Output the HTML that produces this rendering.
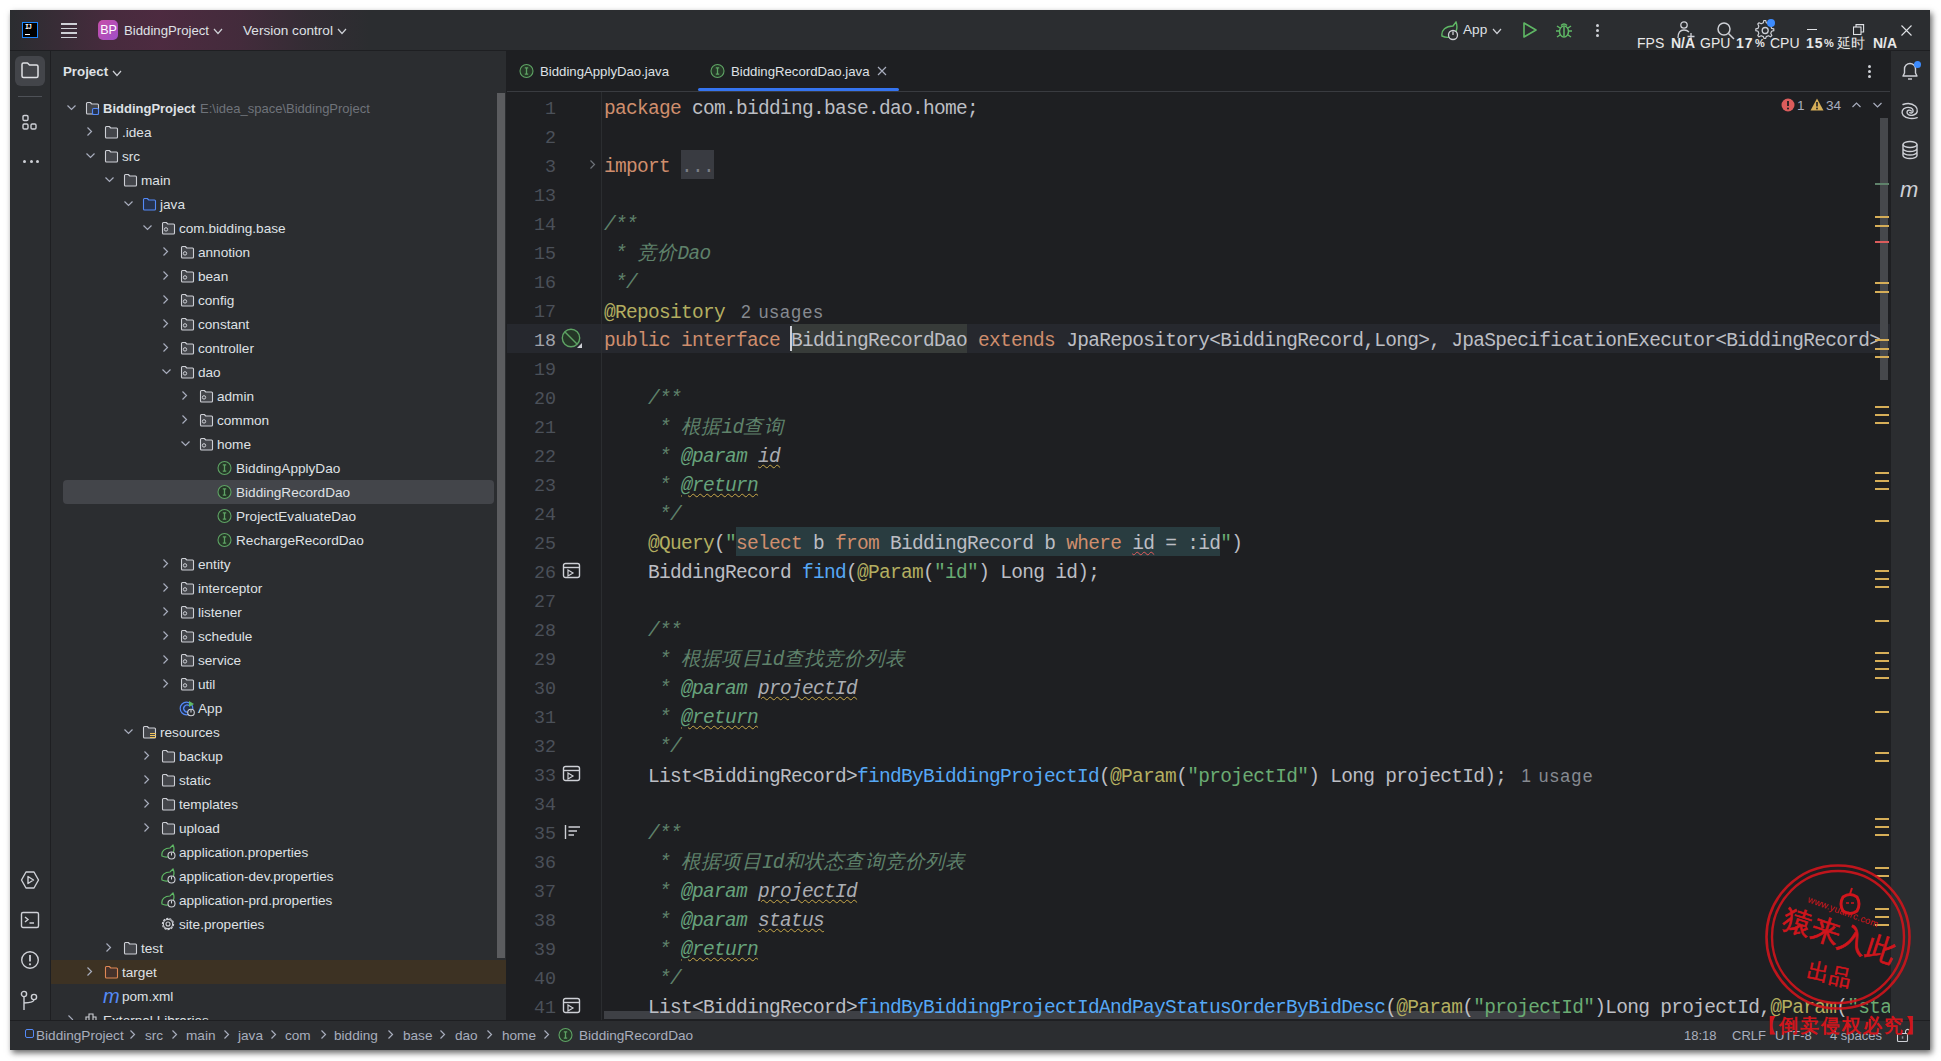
<!DOCTYPE html><html><head><meta charset="utf-8"><style>
*{box-sizing:border-box;margin:0;padding:0}
html,body{width:1941px;height:1061px;overflow:hidden;background:#fff}
body{position:relative;font-family:"Liberation Sans",sans-serif}
.a{position:absolute}
#win{position:absolute;left:10px;top:10px;width:1920px;height:1040px;background:#2B2D30;box-shadow:2px 3px 6px 0 rgba(0,0,0,.6);overflow:hidden}
.ui{font-family:"Liberation Sans",sans-serif;font-size:13.6px;color:#DFE1E5;white-space:nowrap}
.code{font-family:"Liberation Mono",monospace;font-size:19.5px;letter-spacing:-.7px;color:#BCBEC4;white-space:pre;line-height:29px;height:29px}
.kw{color:#CF8E6D} .st{color:#6AAB73} .an{color:#B3AE60} .fn{color:#56A8F5}
.dc{color:#5F826B;font-style:italic} .dt{color:#67A37C;font-style:italic} .dv{color:#ABADB3;font-style:italic}
.cj{font-size:19.5px;letter-spacing:.2px}
.wy{text-decoration:underline wavy #C9A94A;text-decoration-thickness:1px;text-underline-offset:2px}
.wr{text-decoration:underline wavy #E55B5B;text-decoration-thickness:1px;text-underline-offset:2px}
.ln{font-family:"Liberation Mono",monospace;font-size:18.333px;color:#4B5059;text-align:right;width:60px;line-height:29px;height:29px}
.hint{font-family:"Liberation Sans",sans-serif;font-size:17.5px;color:#868A91;letter-spacing:1.5px}
svg{display:block}
</style></head><body><div id="win">
<div class="a" style="left:0;top:0;width:1920px;height:40px;background:#2B2D30"></div>
<div class="a" style="left:0;top:0;width:700px;height:40px;background:linear-gradient(90deg, rgba(110,40,80,0) 0px, rgba(110,40,80,.16) 40px, rgba(110,40,80,.42) 100px, rgba(110,40,80,.5) 150px, rgba(110,40,80,.36) 230px, rgba(110,40,80,.12) 300px, rgba(110,40,80,0) 360px)"></div>
<div class="a" style="left:0;top:40px;width:1920px;height:1px;background:#1E1F22"></div>
<div class="a" style="left:12px;top:12px;width:16px;height:16px;background:#000;border:1.2px solid #1A86FF"></div>
<div class="a" style="left:15px;top:14px;font:bold 6.5px 'Liberation Mono';color:#fff;letter-spacing:-.8px">IJ</div>
<div class="a" style="left:15px;top:24px;width:5px;height:1px;background:#fff"></div>
<div class="a" style="left:51px;top:13.0px;width:16px;height:1.6px;background:#CED0D6"></div>
<div class="a" style="left:51px;top:17.5px;width:16px;height:1.6px;background:#CED0D6"></div>
<div class="a" style="left:51px;top:22.0px;width:16px;height:1.6px;background:#CED0D6"></div>
<div class="a" style="left:51px;top:26.5px;width:16px;height:1.6px;background:#CED0D6"></div>
<div class="a" style="left:88px;top:10px;width:20px;height:20px;border-radius:5px;background:linear-gradient(135deg,#C64FA8,#A04EC9)"></div>
<div class="a ui" style="left:89px;top:13px;font-size:12.5px;color:#fff;width:19px;text-align:center">BP</div>
<div class="a ui" style="left:114px;top:13px;font-size:13.2px">BiddingProject</div>
<svg class="a" style="left:203px;top:18px" width="10" height="6.5"><path d="M1 1 L5.0 5.5 L9 1" fill="none" stroke="#CED0D6" stroke-width="1.2"/></svg>
<div class="a ui" style="left:233px;top:13px;font-size:13.6px">Version control</div>
<svg class="a" style="left:327px;top:18px" width="10" height="6.5"><path d="M1 1 L5.0 5.5 L9 1" fill="none" stroke="#CED0D6" stroke-width="1.2"/></svg>
<svg class="a" style="left:1429px;top:11px" width="22" height="20" viewBox="0 0 22 20"><path d="M3 15 C2 9 7 5 14 5 L17 1 C19 6 18 13 11 16 C8 17 5 16 3 15 Z" fill="none" stroke="#5FB865" stroke-width="1.4"/><circle cx="14" cy="14" r="4.5" fill="#2B2D30" stroke="#CED0D6" stroke-width="1.3"/><path d="M14 10.5 V14" stroke="#CED0D6" stroke-width="1.3"/></svg>
<div class="a ui" style="left:1453px;top:12px;font-size:13.6px">App</div>
<svg class="a" style="left:1482px;top:18px" width="10" height="6.5"><path d="M1 1 L5.0 5.5 L9 1" fill="none" stroke="#CED0D6" stroke-width="1.2"/></svg>
<svg class="a" style="left:1512px;top:11px" width="16" height="18"><path d="M2 2 L14 9 L2 16 Z" fill="none" stroke="#5FB865" stroke-width="1.6" stroke-linejoin="round"/></svg>
<svg class="a" style="left:1545px;top:11px" width="18" height="18" viewBox="0 0 18 18"><ellipse cx="9" cy="10.5" rx="4.5" ry="5.5" fill="none" stroke="#5FB865" stroke-width="1.5"/><path d="M6 4.5 Q9 1.5 12 4.5 M1 10 H4.5 M13.5 10 H17 M2 5 L5 7 M16 5 L13 7 M2 16 L5 14 M16 16 L13 14 M9 6 V15" fill="none" stroke="#5FB865" stroke-width="1.5"/></svg>
<div class="a" style="left:1586px;top:14px;width:3px;height:3px;border-radius:50%;background:#CED0D6"></div>
<div class="a" style="left:1586px;top:19px;width:3px;height:3px;border-radius:50%;background:#CED0D6"></div>
<div class="a" style="left:1586px;top:24px;width:3px;height:3px;border-radius:50%;background:#CED0D6"></div>
<svg class="a" style="left:1666px;top:10px" width="22" height="22" viewBox="0 0 22 22"><circle cx="8" cy="5" r="3.2" fill="none" stroke="#CED0D6" stroke-width="1.3"/><path d="M2 18 C2 12 5 10 8 10 C10 10 12 11 13 12 M15 13 V20 M11.5 16.5 H18.5" fill="none" stroke="#CED0D6" stroke-width="1.3"/></svg>
<svg class="a" style="left:1706px;top:11px" width="20" height="20"><circle cx="8" cy="8" r="6" fill="none" stroke="#CED0D6" stroke-width="1.5"/><path d="M12.5 12.5 L18 18" stroke="#CED0D6" stroke-width="1.5"/></svg>
<svg class="a" style="left:1745px;top:10px" width="22" height="22" viewBox="0 0 22 22"><path d="M11 2 L13 2 L13.6 4.6 L16 5.8 L18.4 4.6 L19.8 6 L18.6 8.4 L19.5 10.8 L22 11.4 L22 13.4 L19.5 14 L18.6 16.4 L19.8 18.8 L18.4 20.2 L16 19 L13.6 20 L13 22 L11 22 L10.4 20 L8 19 L5.6 20.2 L4.2 18.8 L5.4 16.4 L4.5 14 L2 13.4 L2 11.4 L4.5 10.8 L5.4 8.4 L4.2 6 L5.6 4.6 L8 5.8 L10.4 4.6 Z" transform="translate(-1 -1.4) scale(.9)" fill="none" stroke="#CED0D6" stroke-width="1.3" stroke-linejoin="round"/><circle cx="10.2" cy="10.5" r="3" fill="none" stroke="#CED0D6" stroke-width="1.3"/></svg>
<div class="a" style="left:1757px;top:9px;width:8px;height:8px;border-radius:50%;background:#3D8CFF"></div>
<div class="a" style="left:1797px;top:19px;width:10px;height:1.2px;background:#DFE1E5"></div>
<svg class="a" style="left:1843px;top:14px" width="12" height="12"><rect x="0.5" y="3" width="7.5" height="7.5" fill="none" stroke="#DFE1E5" stroke-width="1.1"/><path d="M3 3 V0.6 H10.6 V8 H8" fill="none" stroke="#DFE1E5" stroke-width="1.1"/></svg>
<svg class="a" style="left:1891px;top:15px" width="11" height="11"><path d="M0.5 0.5 L10.5 10.5 M10.5 0.5 L0.5 10.5" stroke="#DFE1E5" stroke-width="1.1"/></svg>
<div class="a ui" style="left:1627px;top:25px;font-size:14px;color:#E8E8E8;">FPS</div>
<div class="a ui" style="left:1661px;top:25px;font-size:14px;color:#E8E8E8;font-weight:bold;">N/A</div>
<div class="a ui" style="left:1690px;top:25px;font-size:14px;color:#E8E8E8;">GPU</div>
<div class="a ui" style="left:1726px;top:25px;font-size:14px;color:#E8E8E8;font-weight:bold;letter-spacing:1px;">17</div>
<div class="a ui" style="left:1745px;top:27px;font-size:11px;color:#E8E8E8;font-weight:bold;">%</div>
<div class="a ui" style="left:1760px;top:25px;font-size:14px;color:#E8E8E8;">CPU</div>
<div class="a ui" style="left:1796px;top:25px;font-size:14px;color:#E8E8E8;font-weight:bold;letter-spacing:1px;">15</div>
<div class="a ui" style="left:1814px;top:27px;font-size:11px;color:#E8E8E8;font-weight:bold;">%</div>
<div class="a ui" style="left:1827px;top:25px;font-size:14px;color:#E8E8E8;">延时</div>
<div class="a ui" style="left:1863px;top:25px;font-size:14px;color:#E8E8E8;font-weight:bold;">N/A</div>
<div class="a" style="left:40px;top:41px;width:1px;height:969px;background:#1E1F22"></div>
<div class="a" style="left:5px;top:46px;width:30px;height:30px;border-radius:6px;background:#43454A"></div>
<svg class="a" style="left:10px;top:51px" width="20" height="20" viewBox="0 0 20 20"><path d="M2 3.5 Q2 2 3.5 2 H7.5 L9.5 4 H16.5 Q18 4 18 5.5 V15 Q18 16.5 16.5 16.5 H3.5 Q2 16.5 2 15 Z" fill="none" stroke="#DFE1E5" stroke-width="1.5" stroke-linejoin="round"/></svg>
<div class="a" style="left:8px;top:86px;width:24px;height:1px;background:#4E5157"></div>
<svg class="a" style="left:11px;top:104px" width="18" height="18" viewBox="0 0 18 18"><rect x="2" y="1.5" width="5" height="5" rx="1.2" fill="none" stroke="#CED0D6" stroke-width="1.4"/><rect x="2" y="10" width="5" height="5" rx="1.2" fill="none" stroke="#CED0D6" stroke-width="1.4"/><rect x="10" y="10" width="5" height="5" rx="1.2" fill="none" stroke="#CED0D6" stroke-width="1.4"/></svg>
<div class="a" style="left:13.0px;top:150px;width:3.4px;height:3.4px;border-radius:50%;background:#CED0D6"></div>
<div class="a" style="left:19.5px;top:150px;width:3.4px;height:3.4px;border-radius:50%;background:#CED0D6"></div>
<div class="a" style="left:26.0px;top:150px;width:3.4px;height:3.4px;border-radius:50%;background:#CED0D6"></div>
<svg class="a" style="left:10px;top:860px" width="20" height="20" viewBox="0 0 20 20"><path d="M6 2 H14 L18.5 10 L14 18 H6 L1.5 10 Z" fill="none" stroke="#CED0D6" stroke-width="1.4" stroke-linejoin="round"/><path d="M8 6.5 L13.5 10 L8 13.5 Z" fill="none" stroke="#CED0D6" stroke-width="1.4" stroke-linejoin="round"/></svg>
<svg class="a" style="left:10px;top:900px" width="20" height="20" viewBox="0 0 20 20"><rect x="1.5" y="2.5" width="17" height="15" rx="1.5" fill="none" stroke="#CED0D6" stroke-width="1.4"/><path d="M5 7 L8 9.5 L5 12 M9.5 13 H14" fill="none" stroke="#CED0D6" stroke-width="1.4"/></svg>
<svg class="a" style="left:10px;top:940px" width="20" height="20" viewBox="0 0 20 20"><circle cx="10" cy="10" r="8.3" fill="none" stroke="#CED0D6" stroke-width="1.4"/><path d="M10 5 V11.5" stroke="#CED0D6" stroke-width="1.8"/><circle cx="10" cy="14.3" r="1.1" fill="#CED0D6"/></svg>
<svg class="a" style="left:10px;top:980px" width="20" height="22" viewBox="0 0 20 22"><circle cx="4" cy="4" r="2.6" fill="none" stroke="#CED0D6" stroke-width="1.4"/><circle cx="14" cy="7" r="2.6" fill="none" stroke="#CED0D6" stroke-width="1.4"/><path d="M4 6.6 V20 M4 13 Q14 13 14 9.6" fill="none" stroke="#CED0D6" stroke-width="1.4"/></svg>
<div class="a ui" style="left:53px;top:54px;font-size:13.3px;font-weight:bold">Project</div>
<svg class="a" style="left:102px;top:60px" width="10" height="6.5"><path d="M1 1 L5.0 5.5 L9 1" fill="none" stroke="#CED0D6" stroke-width="1.2"/></svg>
<div class="a" style="left:496px;top:41px;width:1px;height:969px;background:#1E1F22"></div>
<div class="a" style="left:41px;top:86px;width:455px;height:924px;overflow:hidden">
<svg class="a" style="left:15px;top:8px" width="11" height="8"><path d="M1.5 1.5 L5.5 5.5 L9.5 1.5" fill="none" stroke="#A8ADBD" stroke-width="1.2"/></svg>
<svg class="a" style="left:33px;top:4px" width="16" height="16" viewBox="0 0 16 16"><path d="M2.5 3.5 Q2.5 2.5 3.5 2.5 H6.3 L7.8 4 H13.5 Q14.5 4 14.5 5 V13 Q14.5 14 13.5 14 H3.5 Q2.5 14 2.5 13 Z" fill="#43454A" stroke="#CED0D6" stroke-width="1.1" stroke-linejoin="round"/><rect x="8.5" y="8.5" width="6" height="6" rx="1.3" fill="#25324D" stroke="#548AF7" stroke-width="1.1"/></svg>
<div class="a ui" style="left:52px;top:4.5px;font-weight:bold;font-size:13px;">BiddingProject</div>
<div class="a ui" style="left:149px;top:4.5px;color:#6F737A;font-size:13px">E:\idea_space\BiddingProject</div>
<svg class="a" style="left:35px;top:30px" width="8" height="11"><path d="M1.5 1.5 L5.5 5.5 L1.5 9.5" fill="none" stroke="#A8ADBD" stroke-width="1.2"/></svg>
<svg class="a" style="left:52px;top:28px" width="16" height="16" viewBox="0 0 16 16"><path d="M2.5 3.5 Q2.5 2.5 3.5 2.5 H6.3 L7.8 4 H13.5 Q14.5 4 14.5 5 V13 Q14.5 14 13.5 14 H3.5 Q2.5 14 2.5 13 Z" fill="#43454A" stroke="#CED0D6" stroke-width="1.1" stroke-linejoin="round"/></svg>
<div class="a ui" style="left:71px;top:28.5px;">.idea</div>
<svg class="a" style="left:34px;top:56px" width="11" height="8"><path d="M1.5 1.5 L5.5 5.5 L9.5 1.5" fill="none" stroke="#A8ADBD" stroke-width="1.2"/></svg>
<svg class="a" style="left:52px;top:52px" width="16" height="16" viewBox="0 0 16 16"><path d="M2.5 3.5 Q2.5 2.5 3.5 2.5 H6.3 L7.8 4 H13.5 Q14.5 4 14.5 5 V13 Q14.5 14 13.5 14 H3.5 Q2.5 14 2.5 13 Z" fill="#43454A" stroke="#CED0D6" stroke-width="1.1" stroke-linejoin="round"/></svg>
<div class="a ui" style="left:71px;top:52.5px;">src</div>
<svg class="a" style="left:53px;top:80px" width="11" height="8"><path d="M1.5 1.5 L5.5 5.5 L9.5 1.5" fill="none" stroke="#A8ADBD" stroke-width="1.2"/></svg>
<svg class="a" style="left:71px;top:76px" width="16" height="16" viewBox="0 0 16 16"><path d="M2.5 3.5 Q2.5 2.5 3.5 2.5 H6.3 L7.8 4 H13.5 Q14.5 4 14.5 5 V13 Q14.5 14 13.5 14 H3.5 Q2.5 14 2.5 13 Z" fill="#43454A" stroke="#CED0D6" stroke-width="1.1" stroke-linejoin="round"/></svg>
<div class="a ui" style="left:90px;top:76.5px;">main</div>
<svg class="a" style="left:72px;top:104px" width="11" height="8"><path d="M1.5 1.5 L5.5 5.5 L9.5 1.5" fill="none" stroke="#A8ADBD" stroke-width="1.2"/></svg>
<svg class="a" style="left:90px;top:100px" width="16" height="16" viewBox="0 0 16 16"><path d="M2.5 3.5 Q2.5 2.5 3.5 2.5 H6.3 L7.8 4 H13.5 Q14.5 4 14.5 5 V13 Q14.5 14 13.5 14 H3.5 Q2.5 14 2.5 13 Z" fill="#25324D" stroke="#548AF7" stroke-width="1.1" stroke-linejoin="round"/></svg>
<div class="a ui" style="left:109px;top:100.5px;">java</div>
<svg class="a" style="left:91px;top:128px" width="11" height="8"><path d="M1.5 1.5 L5.5 5.5 L9.5 1.5" fill="none" stroke="#A8ADBD" stroke-width="1.2"/></svg>
<svg class="a" style="left:109px;top:124px" width="16" height="16" viewBox="0 0 16 16"><path d="M2.5 3.5 Q2.5 2.5 3.5 2.5 H6.3 L7.8 4 H13.5 Q14.5 4 14.5 5 V13 Q14.5 14 13.5 14 H3.5 Q2.5 14 2.5 13 Z" fill="#43454A" stroke="#CED0D6" stroke-width="1.1" stroke-linejoin="round"/><circle cx="6" cy="9.4" r="1.7" fill="none" stroke="#CED0D6" stroke-width="1"/></svg>
<div class="a ui" style="left:128px;top:124.5px;">com.bidding.base</div>
<svg class="a" style="left:111px;top:150px" width="8" height="11"><path d="M1.5 1.5 L5.5 5.5 L1.5 9.5" fill="none" stroke="#A8ADBD" stroke-width="1.2"/></svg>
<svg class="a" style="left:128px;top:148px" width="16" height="16" viewBox="0 0 16 16"><path d="M2.5 3.5 Q2.5 2.5 3.5 2.5 H6.3 L7.8 4 H13.5 Q14.5 4 14.5 5 V13 Q14.5 14 13.5 14 H3.5 Q2.5 14 2.5 13 Z" fill="#43454A" stroke="#CED0D6" stroke-width="1.1" stroke-linejoin="round"/><circle cx="6" cy="9.4" r="1.7" fill="none" stroke="#CED0D6" stroke-width="1"/></svg>
<div class="a ui" style="left:147px;top:148.5px;">annotion</div>
<svg class="a" style="left:111px;top:174px" width="8" height="11"><path d="M1.5 1.5 L5.5 5.5 L1.5 9.5" fill="none" stroke="#A8ADBD" stroke-width="1.2"/></svg>
<svg class="a" style="left:128px;top:172px" width="16" height="16" viewBox="0 0 16 16"><path d="M2.5 3.5 Q2.5 2.5 3.5 2.5 H6.3 L7.8 4 H13.5 Q14.5 4 14.5 5 V13 Q14.5 14 13.5 14 H3.5 Q2.5 14 2.5 13 Z" fill="#43454A" stroke="#CED0D6" stroke-width="1.1" stroke-linejoin="round"/><circle cx="6" cy="9.4" r="1.7" fill="none" stroke="#CED0D6" stroke-width="1"/></svg>
<div class="a ui" style="left:147px;top:172.5px;">bean</div>
<svg class="a" style="left:111px;top:198px" width="8" height="11"><path d="M1.5 1.5 L5.5 5.5 L1.5 9.5" fill="none" stroke="#A8ADBD" stroke-width="1.2"/></svg>
<svg class="a" style="left:128px;top:196px" width="16" height="16" viewBox="0 0 16 16"><path d="M2.5 3.5 Q2.5 2.5 3.5 2.5 H6.3 L7.8 4 H13.5 Q14.5 4 14.5 5 V13 Q14.5 14 13.5 14 H3.5 Q2.5 14 2.5 13 Z" fill="#43454A" stroke="#CED0D6" stroke-width="1.1" stroke-linejoin="round"/><circle cx="6" cy="9.4" r="1.7" fill="none" stroke="#CED0D6" stroke-width="1"/></svg>
<div class="a ui" style="left:147px;top:196.5px;">config</div>
<svg class="a" style="left:111px;top:222px" width="8" height="11"><path d="M1.5 1.5 L5.5 5.5 L1.5 9.5" fill="none" stroke="#A8ADBD" stroke-width="1.2"/></svg>
<svg class="a" style="left:128px;top:220px" width="16" height="16" viewBox="0 0 16 16"><path d="M2.5 3.5 Q2.5 2.5 3.5 2.5 H6.3 L7.8 4 H13.5 Q14.5 4 14.5 5 V13 Q14.5 14 13.5 14 H3.5 Q2.5 14 2.5 13 Z" fill="#43454A" stroke="#CED0D6" stroke-width="1.1" stroke-linejoin="round"/><circle cx="6" cy="9.4" r="1.7" fill="none" stroke="#CED0D6" stroke-width="1"/></svg>
<div class="a ui" style="left:147px;top:220.5px;">constant</div>
<svg class="a" style="left:111px;top:246px" width="8" height="11"><path d="M1.5 1.5 L5.5 5.5 L1.5 9.5" fill="none" stroke="#A8ADBD" stroke-width="1.2"/></svg>
<svg class="a" style="left:128px;top:244px" width="16" height="16" viewBox="0 0 16 16"><path d="M2.5 3.5 Q2.5 2.5 3.5 2.5 H6.3 L7.8 4 H13.5 Q14.5 4 14.5 5 V13 Q14.5 14 13.5 14 H3.5 Q2.5 14 2.5 13 Z" fill="#43454A" stroke="#CED0D6" stroke-width="1.1" stroke-linejoin="round"/><circle cx="6" cy="9.4" r="1.7" fill="none" stroke="#CED0D6" stroke-width="1"/></svg>
<div class="a ui" style="left:147px;top:244.5px;">controller</div>
<svg class="a" style="left:110px;top:272px" width="11" height="8"><path d="M1.5 1.5 L5.5 5.5 L9.5 1.5" fill="none" stroke="#A8ADBD" stroke-width="1.2"/></svg>
<svg class="a" style="left:128px;top:268px" width="16" height="16" viewBox="0 0 16 16"><path d="M2.5 3.5 Q2.5 2.5 3.5 2.5 H6.3 L7.8 4 H13.5 Q14.5 4 14.5 5 V13 Q14.5 14 13.5 14 H3.5 Q2.5 14 2.5 13 Z" fill="#43454A" stroke="#CED0D6" stroke-width="1.1" stroke-linejoin="round"/><circle cx="6" cy="9.4" r="1.7" fill="none" stroke="#CED0D6" stroke-width="1"/></svg>
<div class="a ui" style="left:147px;top:268.5px;">dao</div>
<svg class="a" style="left:130px;top:294px" width="8" height="11"><path d="M1.5 1.5 L5.5 5.5 L1.5 9.5" fill="none" stroke="#A8ADBD" stroke-width="1.2"/></svg>
<svg class="a" style="left:147px;top:292px" width="16" height="16" viewBox="0 0 16 16"><path d="M2.5 3.5 Q2.5 2.5 3.5 2.5 H6.3 L7.8 4 H13.5 Q14.5 4 14.5 5 V13 Q14.5 14 13.5 14 H3.5 Q2.5 14 2.5 13 Z" fill="#43454A" stroke="#CED0D6" stroke-width="1.1" stroke-linejoin="round"/><circle cx="6" cy="9.4" r="1.7" fill="none" stroke="#CED0D6" stroke-width="1"/></svg>
<div class="a ui" style="left:166px;top:292.5px;">admin</div>
<svg class="a" style="left:130px;top:318px" width="8" height="11"><path d="M1.5 1.5 L5.5 5.5 L1.5 9.5" fill="none" stroke="#A8ADBD" stroke-width="1.2"/></svg>
<svg class="a" style="left:147px;top:316px" width="16" height="16" viewBox="0 0 16 16"><path d="M2.5 3.5 Q2.5 2.5 3.5 2.5 H6.3 L7.8 4 H13.5 Q14.5 4 14.5 5 V13 Q14.5 14 13.5 14 H3.5 Q2.5 14 2.5 13 Z" fill="#43454A" stroke="#CED0D6" stroke-width="1.1" stroke-linejoin="round"/><circle cx="6" cy="9.4" r="1.7" fill="none" stroke="#CED0D6" stroke-width="1"/></svg>
<div class="a ui" style="left:166px;top:316.5px;">common</div>
<svg class="a" style="left:129px;top:344px" width="11" height="8"><path d="M1.5 1.5 L5.5 5.5 L9.5 1.5" fill="none" stroke="#A8ADBD" stroke-width="1.2"/></svg>
<svg class="a" style="left:147px;top:340px" width="16" height="16" viewBox="0 0 16 16"><path d="M2.5 3.5 Q2.5 2.5 3.5 2.5 H6.3 L7.8 4 H13.5 Q14.5 4 14.5 5 V13 Q14.5 14 13.5 14 H3.5 Q2.5 14 2.5 13 Z" fill="#43454A" stroke="#CED0D6" stroke-width="1.1" stroke-linejoin="round"/><circle cx="6" cy="9.4" r="1.7" fill="none" stroke="#CED0D6" stroke-width="1"/></svg>
<div class="a ui" style="left:166px;top:340.5px;">home</div>
<svg class="a" style="left:166px;top:364px" width="16" height="16" viewBox="0 0 16 16"><circle cx="7.5" cy="8" r="6.5" fill="#253627" stroke="#5EA364" stroke-width="1.1"/><path d="M5.8 4.9 H9.2 M5.8 11.1 H9.2 M7.5 4.9 V11.1" stroke="#5EA364" stroke-width="1.3"/></svg>
<div class="a ui" style="left:185px;top:364.5px;">BiddingApplyDao</div>
<div class="a" style="left:12px;top:384px;width:431px;height:24px;border-radius:4px;background:#43454A"></div>
<svg class="a" style="left:166px;top:388px" width="16" height="16" viewBox="0 0 16 16"><circle cx="7.5" cy="8" r="6.5" fill="#253627" stroke="#5EA364" stroke-width="1.1"/><path d="M5.8 4.9 H9.2 M5.8 11.1 H9.2 M7.5 4.9 V11.1" stroke="#5EA364" stroke-width="1.3"/></svg>
<div class="a ui" style="left:185px;top:388.5px;">BiddingRecordDao</div>
<svg class="a" style="left:166px;top:412px" width="16" height="16" viewBox="0 0 16 16"><circle cx="7.5" cy="8" r="6.5" fill="#253627" stroke="#5EA364" stroke-width="1.1"/><path d="M5.8 4.9 H9.2 M5.8 11.1 H9.2 M7.5 4.9 V11.1" stroke="#5EA364" stroke-width="1.3"/></svg>
<div class="a ui" style="left:185px;top:412.5px;">ProjectEvaluateDao</div>
<svg class="a" style="left:166px;top:436px" width="16" height="16" viewBox="0 0 16 16"><circle cx="7.5" cy="8" r="6.5" fill="#253627" stroke="#5EA364" stroke-width="1.1"/><path d="M5.8 4.9 H9.2 M5.8 11.1 H9.2 M7.5 4.9 V11.1" stroke="#5EA364" stroke-width="1.3"/></svg>
<div class="a ui" style="left:185px;top:436.5px;">RechargeRecordDao</div>
<svg class="a" style="left:111px;top:462px" width="8" height="11"><path d="M1.5 1.5 L5.5 5.5 L1.5 9.5" fill="none" stroke="#A8ADBD" stroke-width="1.2"/></svg>
<svg class="a" style="left:128px;top:460px" width="16" height="16" viewBox="0 0 16 16"><path d="M2.5 3.5 Q2.5 2.5 3.5 2.5 H6.3 L7.8 4 H13.5 Q14.5 4 14.5 5 V13 Q14.5 14 13.5 14 H3.5 Q2.5 14 2.5 13 Z" fill="#43454A" stroke="#CED0D6" stroke-width="1.1" stroke-linejoin="round"/><circle cx="6" cy="9.4" r="1.7" fill="none" stroke="#CED0D6" stroke-width="1"/></svg>
<div class="a ui" style="left:147px;top:460.5px;">entity</div>
<svg class="a" style="left:111px;top:486px" width="8" height="11"><path d="M1.5 1.5 L5.5 5.5 L1.5 9.5" fill="none" stroke="#A8ADBD" stroke-width="1.2"/></svg>
<svg class="a" style="left:128px;top:484px" width="16" height="16" viewBox="0 0 16 16"><path d="M2.5 3.5 Q2.5 2.5 3.5 2.5 H6.3 L7.8 4 H13.5 Q14.5 4 14.5 5 V13 Q14.5 14 13.5 14 H3.5 Q2.5 14 2.5 13 Z" fill="#43454A" stroke="#CED0D6" stroke-width="1.1" stroke-linejoin="round"/><circle cx="6" cy="9.4" r="1.7" fill="none" stroke="#CED0D6" stroke-width="1"/></svg>
<div class="a ui" style="left:147px;top:484.5px;">interceptor</div>
<svg class="a" style="left:111px;top:510px" width="8" height="11"><path d="M1.5 1.5 L5.5 5.5 L1.5 9.5" fill="none" stroke="#A8ADBD" stroke-width="1.2"/></svg>
<svg class="a" style="left:128px;top:508px" width="16" height="16" viewBox="0 0 16 16"><path d="M2.5 3.5 Q2.5 2.5 3.5 2.5 H6.3 L7.8 4 H13.5 Q14.5 4 14.5 5 V13 Q14.5 14 13.5 14 H3.5 Q2.5 14 2.5 13 Z" fill="#43454A" stroke="#CED0D6" stroke-width="1.1" stroke-linejoin="round"/><circle cx="6" cy="9.4" r="1.7" fill="none" stroke="#CED0D6" stroke-width="1"/></svg>
<div class="a ui" style="left:147px;top:508.5px;">listener</div>
<svg class="a" style="left:111px;top:534px" width="8" height="11"><path d="M1.5 1.5 L5.5 5.5 L1.5 9.5" fill="none" stroke="#A8ADBD" stroke-width="1.2"/></svg>
<svg class="a" style="left:128px;top:532px" width="16" height="16" viewBox="0 0 16 16"><path d="M2.5 3.5 Q2.5 2.5 3.5 2.5 H6.3 L7.8 4 H13.5 Q14.5 4 14.5 5 V13 Q14.5 14 13.5 14 H3.5 Q2.5 14 2.5 13 Z" fill="#43454A" stroke="#CED0D6" stroke-width="1.1" stroke-linejoin="round"/><circle cx="6" cy="9.4" r="1.7" fill="none" stroke="#CED0D6" stroke-width="1"/></svg>
<div class="a ui" style="left:147px;top:532.5px;">schedule</div>
<svg class="a" style="left:111px;top:558px" width="8" height="11"><path d="M1.5 1.5 L5.5 5.5 L1.5 9.5" fill="none" stroke="#A8ADBD" stroke-width="1.2"/></svg>
<svg class="a" style="left:128px;top:556px" width="16" height="16" viewBox="0 0 16 16"><path d="M2.5 3.5 Q2.5 2.5 3.5 2.5 H6.3 L7.8 4 H13.5 Q14.5 4 14.5 5 V13 Q14.5 14 13.5 14 H3.5 Q2.5 14 2.5 13 Z" fill="#43454A" stroke="#CED0D6" stroke-width="1.1" stroke-linejoin="round"/><circle cx="6" cy="9.4" r="1.7" fill="none" stroke="#CED0D6" stroke-width="1"/></svg>
<div class="a ui" style="left:147px;top:556.5px;">service</div>
<svg class="a" style="left:111px;top:582px" width="8" height="11"><path d="M1.5 1.5 L5.5 5.5 L1.5 9.5" fill="none" stroke="#A8ADBD" stroke-width="1.2"/></svg>
<svg class="a" style="left:128px;top:580px" width="16" height="16" viewBox="0 0 16 16"><path d="M2.5 3.5 Q2.5 2.5 3.5 2.5 H6.3 L7.8 4 H13.5 Q14.5 4 14.5 5 V13 Q14.5 14 13.5 14 H3.5 Q2.5 14 2.5 13 Z" fill="#43454A" stroke="#CED0D6" stroke-width="1.1" stroke-linejoin="round"/><circle cx="6" cy="9.4" r="1.7" fill="none" stroke="#CED0D6" stroke-width="1"/></svg>
<div class="a ui" style="left:147px;top:580.5px;">util</div>
<svg class="a" style="left:128px;top:604px" width="17" height="17" viewBox="0 0 17 17"><circle cx="7.5" cy="8.5" r="6.3" fill="#25324D" stroke="#548AF7" stroke-width="1.2"/><path d="M10 5.5 A3.5 3.5 0 1 0 10 11.5" fill="none" stroke="#548AF7" stroke-width="1.3"/><path d="M10 1 L15 4 L10 7 Z" fill="#5FB865"/><circle cx="12" cy="12.5" r="3.3" fill="#2B2D30" stroke="#CED0D6" stroke-width="1.1"/><path d="M12 9.8 V12.5" stroke="#CED0D6" stroke-width="1.1"/></svg>
<div class="a ui" style="left:147px;top:604.5px;">App</div>
<svg class="a" style="left:72px;top:632px" width="11" height="8"><path d="M1.5 1.5 L5.5 5.5 L9.5 1.5" fill="none" stroke="#A8ADBD" stroke-width="1.2"/></svg>
<svg class="a" style="left:90px;top:628px" width="16" height="16" viewBox="0 0 16 16"><path d="M2.5 3.5 Q2.5 2.5 3.5 2.5 H6.3 L7.8 4 H13.5 Q14.5 4 14.5 5 V13 Q14.5 14 13.5 14 H3.5 Q2.5 14 2.5 13 Z" fill="#43454A" stroke="#CED0D6" stroke-width="1.1" stroke-linejoin="round"/><path d="M9 9.5 H15 M9 11.5 H15 M9 13.5 H15" stroke="#F2C55C" stroke-width="1.1"/></svg>
<div class="a ui" style="left:109px;top:628.5px;">resources</div>
<svg class="a" style="left:92px;top:654px" width="8" height="11"><path d="M1.5 1.5 L5.5 5.5 L1.5 9.5" fill="none" stroke="#A8ADBD" stroke-width="1.2"/></svg>
<svg class="a" style="left:109px;top:652px" width="16" height="16" viewBox="0 0 16 16"><path d="M2.5 3.5 Q2.5 2.5 3.5 2.5 H6.3 L7.8 4 H13.5 Q14.5 4 14.5 5 V13 Q14.5 14 13.5 14 H3.5 Q2.5 14 2.5 13 Z" fill="#43454A" stroke="#CED0D6" stroke-width="1.1" stroke-linejoin="round"/></svg>
<div class="a ui" style="left:128px;top:652.5px;">backup</div>
<svg class="a" style="left:92px;top:678px" width="8" height="11"><path d="M1.5 1.5 L5.5 5.5 L1.5 9.5" fill="none" stroke="#A8ADBD" stroke-width="1.2"/></svg>
<svg class="a" style="left:109px;top:676px" width="16" height="16" viewBox="0 0 16 16"><path d="M2.5 3.5 Q2.5 2.5 3.5 2.5 H6.3 L7.8 4 H13.5 Q14.5 4 14.5 5 V13 Q14.5 14 13.5 14 H3.5 Q2.5 14 2.5 13 Z" fill="#43454A" stroke="#CED0D6" stroke-width="1.1" stroke-linejoin="round"/></svg>
<div class="a ui" style="left:128px;top:676.5px;">static</div>
<svg class="a" style="left:92px;top:702px" width="8" height="11"><path d="M1.5 1.5 L5.5 5.5 L1.5 9.5" fill="none" stroke="#A8ADBD" stroke-width="1.2"/></svg>
<svg class="a" style="left:109px;top:700px" width="16" height="16" viewBox="0 0 16 16"><path d="M2.5 3.5 Q2.5 2.5 3.5 2.5 H6.3 L7.8 4 H13.5 Q14.5 4 14.5 5 V13 Q14.5 14 13.5 14 H3.5 Q2.5 14 2.5 13 Z" fill="#43454A" stroke="#CED0D6" stroke-width="1.1" stroke-linejoin="round"/></svg>
<div class="a ui" style="left:128px;top:700.5px;">templates</div>
<svg class="a" style="left:92px;top:726px" width="8" height="11"><path d="M1.5 1.5 L5.5 5.5 L1.5 9.5" fill="none" stroke="#A8ADBD" stroke-width="1.2"/></svg>
<svg class="a" style="left:109px;top:724px" width="16" height="16" viewBox="0 0 16 16"><path d="M2.5 3.5 Q2.5 2.5 3.5 2.5 H6.3 L7.8 4 H13.5 Q14.5 4 14.5 5 V13 Q14.5 14 13.5 14 H3.5 Q2.5 14 2.5 13 Z" fill="#43454A" stroke="#CED0D6" stroke-width="1.1" stroke-linejoin="round"/></svg>
<div class="a ui" style="left:128px;top:724.5px;">upload</div>
<svg class="a" style="left:109px;top:748px" width="17" height="16" viewBox="0 0 17 16"><path d="M2 12 C1 7 5 4 10 4 L13 1 C15 5 14 10 9 12.5 C7 13.3 4 13 2 12 Z" fill="none" stroke="#5FB865" stroke-width="1.2"/><circle cx="11.5" cy="11.5" r="3.5" fill="#2B2D30" stroke="#CED0D6" stroke-width="1.1"/><path d="M11.5 8.5 V11.5" stroke="#CED0D6" stroke-width="1.1"/></svg>
<div class="a ui" style="left:128px;top:748.5px;">application.properties</div>
<svg class="a" style="left:109px;top:772px" width="17" height="16" viewBox="0 0 17 16"><path d="M2 12 C1 7 5 4 10 4 L13 1 C15 5 14 10 9 12.5 C7 13.3 4 13 2 12 Z" fill="none" stroke="#5FB865" stroke-width="1.2"/><circle cx="11.5" cy="11.5" r="3.5" fill="#2B2D30" stroke="#CED0D6" stroke-width="1.1"/><path d="M11.5 8.5 V11.5" stroke="#CED0D6" stroke-width="1.1"/></svg>
<div class="a ui" style="left:128px;top:772.5px;">application-dev.properties</div>
<svg class="a" style="left:109px;top:796px" width="17" height="16" viewBox="0 0 17 16"><path d="M2 12 C1 7 5 4 10 4 L13 1 C15 5 14 10 9 12.5 C7 13.3 4 13 2 12 Z" fill="none" stroke="#5FB865" stroke-width="1.2"/><circle cx="11.5" cy="11.5" r="3.5" fill="#2B2D30" stroke="#CED0D6" stroke-width="1.1"/><path d="M11.5 8.5 V11.5" stroke="#CED0D6" stroke-width="1.1"/></svg>
<div class="a ui" style="left:128px;top:796.5px;">application-prd.properties</div>
<svg class="a" style="left:109px;top:820px" width="16" height="16" viewBox="0 0 16 16"><circle cx="8" cy="8" r="5.6" fill="none" stroke="#CED0D6" stroke-width="1.1" stroke-dasharray="2.2 1.2"/><circle cx="8" cy="8" r="4.6" fill="none" stroke="#CED0D6" stroke-width="1.1"/><circle cx="8" cy="8" r="2" fill="none" stroke="#CED0D6" stroke-width="1.1"/></svg>
<div class="a ui" style="left:128px;top:820.5px;">site.properties</div>
<svg class="a" style="left:54px;top:846px" width="8" height="11"><path d="M1.5 1.5 L5.5 5.5 L1.5 9.5" fill="none" stroke="#A8ADBD" stroke-width="1.2"/></svg>
<svg class="a" style="left:71px;top:844px" width="16" height="16" viewBox="0 0 16 16"><path d="M2.5 3.5 Q2.5 2.5 3.5 2.5 H6.3 L7.8 4 H13.5 Q14.5 4 14.5 5 V13 Q14.5 14 13.5 14 H3.5 Q2.5 14 2.5 13 Z" fill="#43454A" stroke="#CED0D6" stroke-width="1.1" stroke-linejoin="round"/></svg>
<div class="a ui" style="left:90px;top:844.5px;">test</div>
<div class="a" style="left:-1px;top:864px;width:470px;height:24px;background:#3D3223"></div>
<svg class="a" style="left:35px;top:870px" width="8" height="11"><path d="M1.5 1.5 L5.5 5.5 L1.5 9.5" fill="none" stroke="#A8ADBD" stroke-width="1.2"/></svg>
<svg class="a" style="left:52px;top:868px" width="16" height="16" viewBox="0 0 16 16"><path d="M2.5 3.5 Q2.5 2.5 3.5 2.5 H6.3 L7.8 4 H13.5 Q14.5 4 14.5 5 V13 Q14.5 14 13.5 14 H3.5 Q2.5 14 2.5 13 Z" fill="#45322B" stroke="#E08855" stroke-width="1.1" stroke-linejoin="round"/></svg>
<div class="a ui" style="left:71px;top:868.5px;">target</div>
<div class="a" style="left:52px;top:892px;font:italic 20px 'Liberation Sans';color:#548AF7;line-height:16px">m</div>
<div class="a ui" style="left:71px;top:892.5px;">pom.xml</div>
<svg class="a" style="left:16px;top:918px" width="8" height="11"><path d="M1.5 1.5 L5.5 5.5 L1.5 9.5" fill="none" stroke="#A8ADBD" stroke-width="1.2"/></svg>
<svg class="a" style="left:33px;top:916px" width="16" height="16"><path d="M2 14 V5 H5 V2 H9 V5 H12 V14 Z M5 5 V14 M9 5 V14" fill="none" stroke="#CED0D6" stroke-width="1.1"/></svg>
<div class="a ui" style="left:52px;top:916.5px;">External Libraries</div>
</div>
<div class="a" style="left:487px;top:83px;width:8px;height:865px;background:#5B5C5F"></div>
<div class="a" style="left:497px;top:41px;width:1383px;height:969px;background:#1E1F22;overflow:hidden">
<div class="a" style="left:0;top:40px;width:1383px;height:1px;background:#393B40"></div>
<svg class="a" style="left:12px;top:12px" width="16" height="16" viewBox="0 0 16 16"><circle cx="7.5" cy="8" r="6.5" fill="#253627" stroke="#5EA364" stroke-width="1.1"/><path d="M5.8 4.9 H9.2 M5.8 11.1 H9.2 M7.5 4.9 V11.1" stroke="#5EA364" stroke-width="1.3"/></svg>
<div class="a ui" style="left:33px;top:13px;font-size:13.2px">BiddingApplyDao.java</div>
<svg class="a" style="left:203px;top:12px" width="16" height="16" viewBox="0 0 16 16"><circle cx="7.5" cy="8" r="6.5" fill="#253627" stroke="#5EA364" stroke-width="1.1"/><path d="M5.8 4.9 H9.2 M5.8 11.1 H9.2 M7.5 4.9 V11.1" stroke="#5EA364" stroke-width="1.3"/></svg>
<div class="a ui" style="left:224px;top:13px;font-size:13.2px">BiddingRecordDao.java</div>
<svg class="a" style="left:370px;top:15px" width="10" height="10"><path d="M1 1 L9 9 M9 1 L1 9" stroke="#A8ADBD" stroke-width="1.2"/></svg>
<div class="a" style="left:191px;top:37px;width:201px;height:3px;border-radius:1.5px;background:#3574F0"></div>
<div class="a" style="left:1361px;top:14px;width:3px;height:3px;border-radius:50%;background:#CED0D6"></div>
<div class="a" style="left:1361px;top:19px;width:3px;height:3px;border-radius:50%;background:#CED0D6"></div>
<div class="a" style="left:1361px;top:24px;width:3px;height:3px;border-radius:50%;background:#CED0D6"></div>
<div class="a" style="left:0;top:273px;width:1383px;height:29px;background:#26282E"></div>
<div class="a" style="left:94px;top:41px;width:1px;height:930px;background:#2B2D30"></div>
<div class="a" style="left:97px;top:960px;width:956px;height:8px;background:#3E4045"></div>
<div class="a" style="left:174px;top:99px;width:33px;height:29px;background:#393B41"></div>
<div class="a" style="left:284px;top:273px;width:176px;height:29px;background:#373B39"></div>
<div class="a" style="left:229px;top:476px;width:484px;height:29px;background:#293C40"></div>
<div class="a ln" style="left:-11px;top:44px;color:#4B5059">1</div>
<div class="a code" style="left:97px;top:44px"><span class="kw">package</span> com.bidding.base.dao.home;</div>
<div class="a ln" style="left:-11px;top:73px;color:#4B5059">2</div>
<div class="a ln" style="left:-11px;top:102px;color:#4B5059">3</div>
<div class="a code" style="left:97px;top:102px"><span class="kw">import</span> <span style="color:#7A7E85">...</span></div>
<div class="a ln" style="left:-11px;top:131px;color:#4B5059">13</div>
<div class="a ln" style="left:-11px;top:160px;color:#4B5059">14</div>
<div class="a code" style="left:97px;top:160px"><span class="dc">/**</span></div>
<div class="a ln" style="left:-11px;top:189px;color:#4B5059">15</div>
<div class="a code" style="left:97px;top:189px"><span class="dc"> * <span class="cj">竞价</span>Dao</span></div>
<div class="a ln" style="left:-11px;top:218px;color:#4B5059">16</div>
<div class="a code" style="left:97px;top:218px"><span class="dc"> */</span></div>
<div class="a ln" style="left:-11px;top:247px;color:#4B5059">17</div>
<div class="a code" style="left:97px;top:247px"><span class="an">@Repository</span><span class="hint" style="margin-left:16px">2 usages</span></div>
<div class="a ln" style="left:-11px;top:276px;color:#A1A3AB">18</div>
<div class="a code" style="left:97px;top:276px"><span class="kw">public</span> <span class="kw">interface</span> BiddingRecordDao <span class="kw">extends</span> JpaRepository&lt;BiddingRecord,Long&gt;, JpaSpecificationExecutor&lt;BiddingRecord&gt;</div>
<div class="a" style="left:283px;top:275px;width:2px;height:25px;background:#CED0D6"></div>
<div class="a ln" style="left:-11px;top:305px;color:#4B5059">19</div>
<div class="a ln" style="left:-11px;top:334px;color:#4B5059">20</div>
<div class="a code" style="left:97px;top:334px">    <span class="dc">/**</span></div>
<div class="a ln" style="left:-11px;top:363px;color:#4B5059">21</div>
<div class="a code" style="left:97px;top:363px">     <span class="dc">* <span class="cj">根据</span>id<span class="cj">查询</span></span></div>
<div class="a ln" style="left:-11px;top:392px;color:#4B5059">22</div>
<div class="a code" style="left:97px;top:392px">     <span class="dc">* </span><span class="dt">@param</span> <span class="dv wy">id</span></div>
<div class="a ln" style="left:-11px;top:421px;color:#4B5059">23</div>
<div class="a code" style="left:97px;top:421px">     <span class="dc">* </span><span class="dt wy">@return</span></div>
<div class="a ln" style="left:-11px;top:450px;color:#4B5059">24</div>
<div class="a code" style="left:97px;top:450px">     <span class="dc">*/</span></div>
<div class="a ln" style="left:-11px;top:479px;color:#4B5059">25</div>
<div class="a code" style="left:97px;top:479px">    <span class="an">@Query</span>(<span class="st">&quot;</span><span><span class="kw">select</span> b <span class="kw">from</span> BiddingRecord b <span class="kw">where</span> <span class="wr">id</span> = :id</span><span class="st">&quot;</span>)</div>
<div class="a ln" style="left:-11px;top:508px;color:#4B5059">26</div>
<div class="a code" style="left:97px;top:508px">    BiddingRecord <span class="fn">find</span>(<span class="an">@Param</span>(<span class="st">&quot;id&quot;</span>) Long id);</div>
<div class="a ln" style="left:-11px;top:537px;color:#4B5059">27</div>
<div class="a ln" style="left:-11px;top:566px;color:#4B5059">28</div>
<div class="a code" style="left:97px;top:566px">    <span class="dc">/**</span></div>
<div class="a ln" style="left:-11px;top:595px;color:#4B5059">29</div>
<div class="a code" style="left:97px;top:595px">     <span class="dc">* <span class="cj">根据项目</span>id<span class="cj">查找竞价列表</span></span></div>
<div class="a ln" style="left:-11px;top:624px;color:#4B5059">30</div>
<div class="a code" style="left:97px;top:624px">     <span class="dc">* </span><span class="dt">@param</span> <span class="dv wy">projectId</span></div>
<div class="a ln" style="left:-11px;top:653px;color:#4B5059">31</div>
<div class="a code" style="left:97px;top:653px">     <span class="dc">* </span><span class="dt wy">@return</span></div>
<div class="a ln" style="left:-11px;top:682px;color:#4B5059">32</div>
<div class="a code" style="left:97px;top:682px">     <span class="dc">*/</span></div>
<div class="a ln" style="left:-11px;top:711px;color:#4B5059">33</div>
<div class="a code" style="left:97px;top:711px">    List&lt;BiddingRecord&gt;<span class="fn">findByBiddingProjectId</span>(<span class="an">@Param</span>(<span class="st">&quot;projectId&quot;</span>) Long projectId);<span class="hint" style="margin-left:15px;letter-spacing:1.5px">1 usage</span></div>
<div class="a ln" style="left:-11px;top:740px;color:#4B5059">34</div>
<div class="a ln" style="left:-11px;top:769px;color:#4B5059">35</div>
<div class="a code" style="left:97px;top:769px">    <span class="dc">/**</span></div>
<div class="a ln" style="left:-11px;top:798px;color:#4B5059">36</div>
<div class="a code" style="left:97px;top:798px">     <span class="dc">* <span class="cj">根据项目</span>Id<span class="cj">和状态查询竞价列表</span></span></div>
<div class="a ln" style="left:-11px;top:827px;color:#4B5059">37</div>
<div class="a code" style="left:97px;top:827px">     <span class="dc">* </span><span class="dt">@param</span> <span class="dv wy">projectId</span></div>
<div class="a ln" style="left:-11px;top:856px;color:#4B5059">38</div>
<div class="a code" style="left:97px;top:856px">     <span class="dc">* </span><span class="dt">@param</span> <span class="dv wy">status</span></div>
<div class="a ln" style="left:-11px;top:885px;color:#4B5059">39</div>
<div class="a code" style="left:97px;top:885px">     <span class="dc">* </span><span class="dt wy">@return</span></div>
<div class="a ln" style="left:-11px;top:914px;color:#4B5059">40</div>
<div class="a code" style="left:97px;top:914px">     <span class="dc">*/</span></div>
<div class="a ln" style="left:-11px;top:943px;color:#4B5059">41</div>
<div class="a code" style="left:97px;top:943px">    List&lt;BiddingRecord&gt;<span class="fn">findByBiddingProjectIdAndPayStatusOrderByBidDesc</span>(<span class="an">@Param</span>(<span class="st">&quot;projectId&quot;</span>)Long projectId,<span class="an">@Param</span>(<span class="st">&quot;sta</span></div>
<svg class="a" style="left:82px;top:108px" width="8" height="12"><path d="M1.5 1.5 L5.5 5.5 L1.5 9.5" fill="none" stroke="#6F737A" stroke-width="1.2"/></svg>
<svg class="a" style="left:54px;top:277px" width="22" height="22" viewBox="0 0 22 22"><circle cx="10" cy="10" r="8.7" fill="#253627" stroke="#5EA364" stroke-width="1.4"/><path d="M4 4 L16 16" stroke="#5EA364" stroke-width="1.4"/><path d="M16 20 L21 20 L21 15 Z" fill="#CED0D6"/></svg>
<svg class="a" style="left:55px;top:511px" width="20" height="18" viewBox="0 0 20 18"><rect x="1.5" y="1.5" width="16" height="14" rx="2" fill="none" stroke="#CED0D6" stroke-width="1.4"/><path d="M1.5 5.5 H17.5" stroke="#CED0D6" stroke-width="1.4"/><path d="M6 8 L11 11 L6 14 Z" fill="none" stroke="#CED0D6" stroke-width="1.2"/></svg>
<svg class="a" style="left:55px;top:714px" width="20" height="18" viewBox="0 0 20 18"><rect x="1.5" y="1.5" width="16" height="14" rx="2" fill="none" stroke="#CED0D6" stroke-width="1.4"/><path d="M1.5 5.5 H17.5" stroke="#CED0D6" stroke-width="1.4"/><path d="M6 8 L11 11 L6 14 Z" fill="none" stroke="#CED0D6" stroke-width="1.2"/></svg>
<svg class="a" style="left:55px;top:946px" width="20" height="18" viewBox="0 0 20 18"><rect x="1.5" y="1.5" width="16" height="14" rx="2" fill="none" stroke="#CED0D6" stroke-width="1.4"/><path d="M1.5 5.5 H17.5" stroke="#CED0D6" stroke-width="1.4"/><path d="M6 8 L11 11 L6 14 Z" fill="none" stroke="#CED0D6" stroke-width="1.2"/></svg>
<svg class="a" style="left:57px;top:774px" width="18" height="14"><path d="M1.5 0 V14 M4.5 2 H16 M4.5 6 H13 M4.5 10 H10" stroke="#CED0D6" stroke-width="1.4"/></svg>
<svg class="a" style="left:1274px;top:47px" width="14" height="14"><circle cx="7" cy="7" r="6.5" fill="#DB5C5C"/><path d="M7 3 V8" stroke="#1E1F22" stroke-width="1.8"/><circle cx="7" cy="10.5" r="1" fill="#1E1F22"/></svg>
<div class="a ui" style="left:1290px;top:47px;color:#A8ADBD">1</div>
<svg class="a" style="left:1303px;top:47px" width="14" height="13"><path d="M7 0.5 L13.5 12.5 H0.5 Z" fill="#D6AE58"/><path d="M7 4 V8.5" stroke="#1E1F22" stroke-width="1.6"/><circle cx="7" cy="10.5" r=".9" fill="#1E1F22"/></svg>
<div class="a ui" style="left:1319px;top:47px;color:#A8ADBD">34</div>
<svg class="a" style="left:1344px;top:50px" width="11" height="8"><path d="M1.5 6 L5.5 2 L9.5 6" fill="none" stroke="#A8ADBD" stroke-width="1.2"/></svg>
<svg class="a" style="left:1365px;top:50px" width="11" height="8"><path d="M1.5 2 L5.5 6 L9.5 2" fill="none" stroke="#A8ADBD" stroke-width="1.2"/></svg>
<div class="a" style="left:1373px;top:67px;width:8px;height:262px;background:#46484C"></div>
<div class="a" style="left:1368px;top:132px;width:14px;height:2px;background:#5F826B"></div>
<div class="a" style="left:1368px;top:165px;width:14px;height:2px;background:#D6AE58"></div>
<div class="a" style="left:1368px;top:174px;width:14px;height:2px;background:#D6AE58"></div>
<div class="a" style="left:1368px;top:190px;width:14px;height:2px;background:#DB5C5C"></div>
<div class="a" style="left:1368px;top:231px;width:14px;height:2px;background:#D6AE58"></div>
<div class="a" style="left:1368px;top:240px;width:14px;height:2px;background:#D6AE58"></div>
<div class="a" style="left:1368px;top:288px;width:14px;height:2px;background:#D6AE58"></div>
<div class="a" style="left:1368px;top:297px;width:14px;height:2px;background:#D6AE58"></div>
<div class="a" style="left:1368px;top:305px;width:14px;height:2px;background:#D6AE58"></div>
<div class="a" style="left:1368px;top:355px;width:14px;height:2px;background:#D6AE58"></div>
<div class="a" style="left:1368px;top:363px;width:14px;height:2px;background:#D6AE58"></div>
<div class="a" style="left:1368px;top:371px;width:14px;height:2px;background:#D6AE58"></div>
<div class="a" style="left:1368px;top:421px;width:14px;height:2px;background:#D6AE58"></div>
<div class="a" style="left:1368px;top:429px;width:14px;height:2px;background:#D6AE58"></div>
<div class="a" style="left:1368px;top:437px;width:14px;height:2px;background:#D6AE58"></div>
<div class="a" style="left:1368px;top:469px;width:14px;height:2px;background:#D6AE58"></div>
<div class="a" style="left:1368px;top:519px;width:14px;height:2px;background:#D6AE58"></div>
<div class="a" style="left:1368px;top:527px;width:14px;height:2px;background:#D6AE58"></div>
<div class="a" style="left:1368px;top:535px;width:14px;height:2px;background:#D6AE58"></div>
<div class="a" style="left:1368px;top:569px;width:14px;height:2px;background:#D6AE58"></div>
<div class="a" style="left:1368px;top:601px;width:14px;height:2px;background:#D6AE58"></div>
<div class="a" style="left:1368px;top:609px;width:14px;height:2px;background:#D6AE58"></div>
<div class="a" style="left:1368px;top:617px;width:14px;height:2px;background:#D6AE58"></div>
<div class="a" style="left:1368px;top:626px;width:14px;height:2px;background:#D6AE58"></div>
<div class="a" style="left:1368px;top:660px;width:14px;height:2px;background:#D6AE58"></div>
<div class="a" style="left:1368px;top:701px;width:14px;height:2px;background:#D6AE58"></div>
<div class="a" style="left:1368px;top:709px;width:14px;height:2px;background:#D6AE58"></div>
<div class="a" style="left:1368px;top:767px;width:14px;height:2px;background:#D6AE58"></div>
<div class="a" style="left:1368px;top:775px;width:14px;height:2px;background:#D6AE58"></div>
<div class="a" style="left:1368px;top:783px;width:14px;height:2px;background:#D6AE58"></div>
<div class="a" style="left:1368px;top:816px;width:14px;height:2px;background:#D6AE58"></div>
<div class="a" style="left:1368px;top:824px;width:14px;height:2px;background:#D6AE58"></div>
<div class="a" style="left:1368px;top:857px;width:14px;height:2px;background:#D6AE58"></div>
<div class="a" style="left:1368px;top:865px;width:14px;height:2px;background:#D6AE58"></div>
<div class="a" style="left:1368px;top:873px;width:14px;height:2px;background:#D6AE58"></div>
</div>
<div class="a" style="left:1880px;top:41px;width:1px;height:969px;background:#1E1F22"></div>
<svg class="a" style="left:1890px;top:50px" width="20" height="22" viewBox="0 0 20 22"><path d="M3 16 H17 L15.5 13 V9 A5.5 5.5 0 0 0 4.5 9 V13 Z" fill="none" stroke="#CED0D6" stroke-width="1.4" stroke-linejoin="round"/><path d="M8 19 H12" stroke="#CED0D6" stroke-width="1.4"/></svg>
<div class="a" style="left:1904px;top:51px;width:7px;height:7px;border-radius:50%;background:#3D8CFF"></div>
<svg class="a" style="left:1890px;top:90px" width="20" height="22" viewBox="0 0 20 22"><path d="M3 4.5 C7 3 12 3.2 15.5 6.2 C18.5 9.2 17.8 13.8 13.5 15 C10 16 6.8 14.5 7 12 C7.2 10 9.8 9.6 11.3 11" fill="none" stroke="#CED0D6" stroke-width="1.4" stroke-linecap="round"/><path d="M17.2 17.6 C12.5 19.2 6.5 18.8 3.3 15.5 C0.8 12.5 2.2 8.6 6.2 7.6 C9.6 6.8 13.2 8.2 13.1 11 C13 12.8 11.2 13.4 9.8 12.6" fill="none" stroke="#CED0D6" stroke-width="1.4" stroke-linecap="round"/></svg>
<svg class="a" style="left:1890px;top:130px" width="20" height="20" viewBox="0 0 20 20"><ellipse cx="10" cy="4.5" rx="7" ry="3" fill="none" stroke="#CED0D6" stroke-width="1.4"/><path d="M3 4.5 V15.5 C3 17 6 18.5 10 18.5 C14 18.5 17 17 17 15.5 V4.5 M3 8.5 C3 10 6 11.5 10 11.5 C14 11.5 17 10 17 8.5 M3 12 C3 13.5 6 15 10 15 C14 15 17 13.5 17 12" fill="none" stroke="#CED0D6" stroke-width="1.4"/></svg>
<div class="a" style="left:1890px;top:168px;font:italic 22px 'Liberation Sans';color:#CED0D6;line-height:24px">m</div>
<div class="a" style="left:0;top:1010px;width:1920px;height:1px;background:#1E1F22"></div>
<div class="a" style="left:0;top:1011px;width:1920px;height:29px;background:#2B2D30"></div>
<div class="a" style="left:15px;top:1019px;width:9px;height:9px;border:1.2px solid #548AF7;border-radius:2px"></div>
<div class="a ui" style="left:26px;top:1018px;color:#A8ADBD">BiddingProject</div>
<svg class="a" style="left:119px;top:1019px" width="8" height="11"><path d="M1.5 1.5 L5.5 5.5 L1.5 9.5" fill="none" stroke="#A8ADBD" stroke-width="1.2"/></svg>
<div class="a ui" style="left:135px;top:1018px;color:#A8ADBD">src</div>
<svg class="a" style="left:161px;top:1019px" width="8" height="11"><path d="M1.5 1.5 L5.5 5.5 L1.5 9.5" fill="none" stroke="#A8ADBD" stroke-width="1.2"/></svg>
<div class="a ui" style="left:176px;top:1018px;color:#A8ADBD">main</div>
<svg class="a" style="left:213px;top:1019px" width="8" height="11"><path d="M1.5 1.5 L5.5 5.5 L1.5 9.5" fill="none" stroke="#A8ADBD" stroke-width="1.2"/></svg>
<div class="a ui" style="left:228px;top:1018px;color:#A8ADBD">java</div>
<svg class="a" style="left:260px;top:1019px" width="8" height="11"><path d="M1.5 1.5 L5.5 5.5 L1.5 9.5" fill="none" stroke="#A8ADBD" stroke-width="1.2"/></svg>
<div class="a ui" style="left:275px;top:1018px;color:#A8ADBD">com</div>
<svg class="a" style="left:310px;top:1019px" width="8" height="11"><path d="M1.5 1.5 L5.5 5.5 L1.5 9.5" fill="none" stroke="#A8ADBD" stroke-width="1.2"/></svg>
<div class="a ui" style="left:324px;top:1018px;color:#A8ADBD">bidding</div>
<svg class="a" style="left:377px;top:1019px" width="8" height="11"><path d="M1.5 1.5 L5.5 5.5 L1.5 9.5" fill="none" stroke="#A8ADBD" stroke-width="1.2"/></svg>
<div class="a ui" style="left:393px;top:1018px;color:#A8ADBD">base</div>
<svg class="a" style="left:429px;top:1019px" width="8" height="11"><path d="M1.5 1.5 L5.5 5.5 L1.5 9.5" fill="none" stroke="#A8ADBD" stroke-width="1.2"/></svg>
<div class="a ui" style="left:445px;top:1018px;color:#A8ADBD">dao</div>
<svg class="a" style="left:476px;top:1019px" width="8" height="11"><path d="M1.5 1.5 L5.5 5.5 L1.5 9.5" fill="none" stroke="#A8ADBD" stroke-width="1.2"/></svg>
<div class="a ui" style="left:492px;top:1018px;color:#A8ADBD">home</div>
<svg class="a" style="left:533px;top:1019px" width="8" height="11"><path d="M1.5 1.5 L5.5 5.5 L1.5 9.5" fill="none" stroke="#A8ADBD" stroke-width="1.2"/></svg>
<div class="a ui" style="left:569px;top:1018px;color:#A8ADBD">BiddingRecordDao</div>
<svg class="a" style="left:548px;top:1017px" width="16" height="16" viewBox="0 0 16 16"><circle cx="7.5" cy="8" r="6.5" fill="#253627" stroke="#5EA364" stroke-width="1.1"/><path d="M5.8 4.9 H9.2 M5.8 11.1 H9.2 M7.5 4.9 V11.1" stroke="#5EA364" stroke-width="1.3"/></svg>
<div class="a ui" style="left:1674px;top:1018px;color:#A8ADBD;font-size:13px">18:18</div>
<div class="a ui" style="left:1722px;top:1018px;color:#A8ADBD;font-size:13px">CRLF</div>
<div class="a ui" style="left:1765px;top:1018px;color:#A8ADBD;font-size:13px">UTF-8</div>
<div class="a ui" style="left:1820px;top:1018px;color:#A8ADBD;font-size:13px">4 spaces</div>
<svg class="a" style="left:1886px;top:1017px" width="16" height="16"><path d="M9.5 6 V4.5 A2.2 2.2 0 0 1 13.2 3" fill="none" stroke="#CED0D6" stroke-width="1.1"/><rect x="1.5" y="6.5" width="10" height="8" rx="1" fill="none" stroke="#CED0D6" stroke-width="1.1"/><rect x="5.8" y="9.3" width="1.5" height="2.4" fill="#8C8F94"/></svg>
</div>
<svg class="a" style="left:1740px;top:850px" width="200" height="200" viewBox="0 0 200 200">
<g fill="none" stroke="#D0151C" opacity=".9">
<circle cx="98" cy="87" r="71.5" stroke-width="2.6"/>
<circle cx="98" cy="87" r="66" stroke-width="2.4"/>
</g>
<g fill="#D0151C">
<text x="0" y="0" transform="translate(41 77) rotate(18)" font-family="Liberation Serif" font-size="29" font-weight="normal" stroke="#D0151C" stroke-width=".6">猿来入此</text>
<text x="0" y="0" transform="translate(66 127) rotate(12)" font-family="Liberation Serif" font-size="22" font-weight="normal" stroke="#D0151C" stroke-width=".5">出品</text>
<text x="0" y="0" transform="translate(67 52) rotate(20)" font-family="Liberation Sans" font-size="9.5" letter-spacing=".2">www.yuanrc.com</text>
</g>
<path d="M103 47 Q110 42 117 47 Q121 54 117 61 Q110 66 103 61 Q99 54 103 47 Z" fill="none" stroke="#D0151C" stroke-width="3"/>
<path d="M110 44 L112 38" stroke="#D0151C" stroke-width="2"/>
<path d="M106 53 H109 M111 53 H114" stroke="#D0151C" stroke-width="1.5"/>
</svg>
<div class="a" style="left:1758px;top:1013px;font:bold 19px 'Liberation Serif';color:#D0151C;white-space:nowrap;letter-spacing:2px">【倒卖侵权必究】</div></body></html>
